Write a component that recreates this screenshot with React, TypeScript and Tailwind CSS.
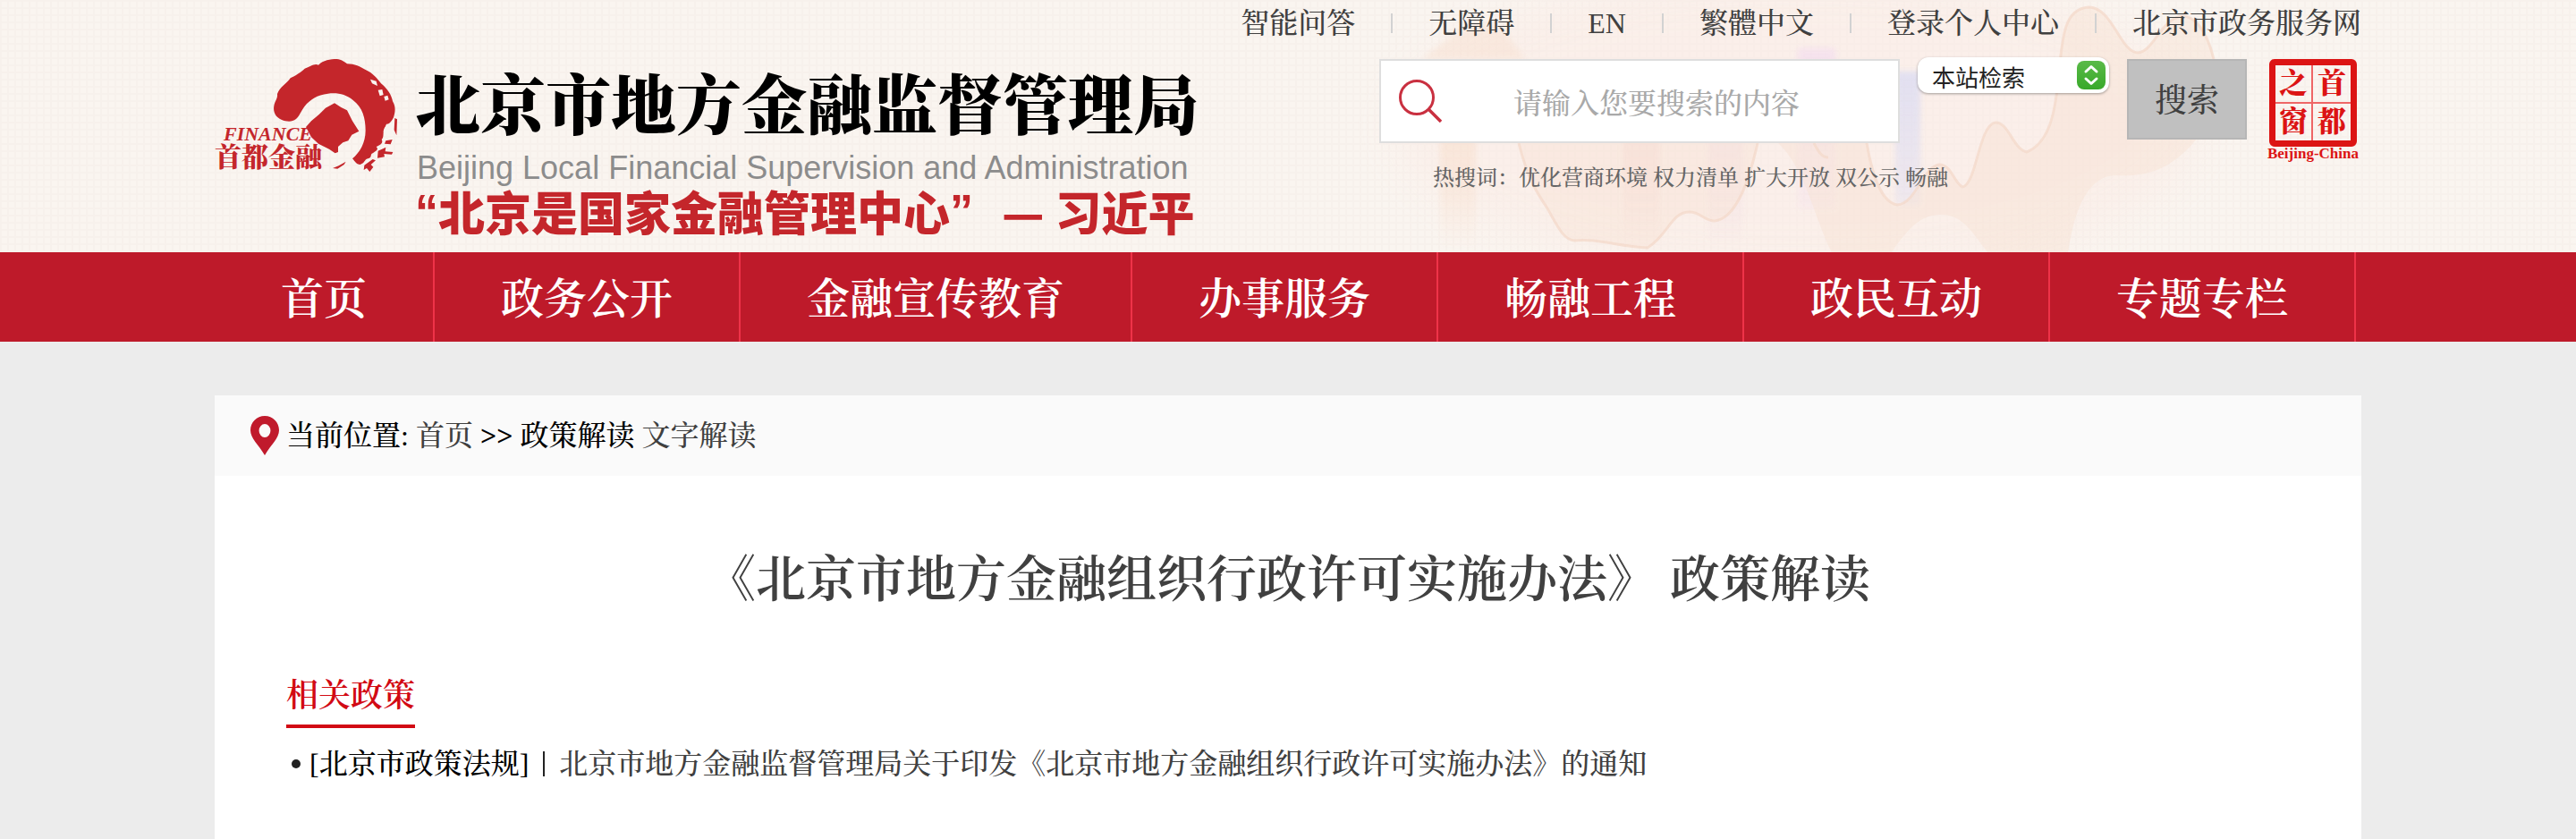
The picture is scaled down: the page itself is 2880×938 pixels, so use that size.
import type { ReactNode } from 'react';

const topLinks = ['智能问答', '无障碍', 'EN', '繁體中文', '登录个人中心', '北京市政务服务网'];
const hotWords = ['优化营商环境', '权力清单', '扩大开放', '双公示', '畅融'];
const navItems = ['首页', '政务公开', '金融宣传教育', '办事服务', '畅融工程', '政民互动', '专题专栏'];

function Container({ className = '', children }: { className?: string; children: ReactNode }) {
  return <div className={`mx-auto w-full max-w-[2400px] ${className}`}>{children}</div>;
}

function HeaderArt() {
  return (
    <svg
      className="pointer-events-none absolute left-1/2 top-0 -ml-10 opacity-80"
      width="1200"
      height="282"
      viewBox="0 0 1200 282"
      fill="none"
      aria-hidden="true"
    >
      <defs>
        <filter id="soft" x="-20%" y="-20%" width="140%" height="140%">
          <feGaussianBlur stdDeviation="24" />
        </filter>
        <filter id="edge" x="-20%" y="-20%" width="140%" height="140%">
          <feGaussianBlur stdDeviation="3" />
        </filter>
        <linearGradient id="fade" x1="0" y1="0" x2="0" y2="1">
          <stop offset="0" stopColor="#fff" stopOpacity="1" />
          <stop offset="0.75" stopColor="#fff" stopOpacity="0.4" />
          <stop offset="1" stopColor="#fff" stopOpacity="0" />
        </linearGradient>
        <mask id="fadeMask">
          <rect width="1200" height="282" fill="url(#fade)" />
        </mask>
      </defs>
      <ellipse cx="610" cy="140" rx="450" ry="170" fill="#fbe8e2" opacity="0.55" filter="url(#soft)" />
      <path d="M190 66C210 50 240 24 262 26C285 30 292 52 306 66Z" fill="#f8dfcf" opacity="0.6" filter="url(#edge)" />
      <g mask="url(#fadeMask)" filter="url(#edge)">
        <rect x="210" y="120" width="40" height="162" fill="#f8d9c4" />
        <rect x="414" y="120" width="42" height="150" fill="#f4cfcb" />
        <rect x="509" y="120" width="40" height="150" fill="#f0d8e2" />
        <rect x="610" y="54" width="42" height="180" fill="#f4dcee" />
        <rect x="719" y="80" width="28" height="150" fill="#d3d5f4" />
      </g>
      <path
        d="M298 160C308 200 318 215 330 233C342 254 348 268 360 269C385 266 410 276 442 277C466 262 468 237 489 237C501 237 506 247 517 247C542 244 556 200 565 160Z"
        fill="#f8e0d0"
        opacity="0.45"
      />
      <path
        d="M588 160C620 190 630 250 648 282H715C740 244 755 240 772 240C796 241 806 262 822 282H912C920 230 936 196 966 196C1000 198 1030 190 1060 150L1075 66C1066 30 1052 18 1040 18C1016 20 1008 58 990 59C970 58 962 8 935 8C908 10 906 40 902 80C898 130 890 160 866 170C850 166 846 137 831 137C812 140 810 206 794 209C784 204 782 184 768 184C750 186 742 228 721 229C704 226 694 200 687 160Z"
        fill="#f8e0d0"
        opacity="0.5"
      />
      <g stroke="#f3d3c2" strokeWidth="3" opacity="0.75">
        <path d="M298 160C308 200 318 215 330 233C342 254 348 268 360 269C385 266 410 276 442 277C466 262 468 237 489 237C501 237 506 247 517 247C542 244 556 200 565 160" />
        <path d="M628 160C634 172 638 176 644 176" />
        <path d="M687 160C694 200 704 226 721 229C742 228 750 186 768 184C782 184 784 204 794 209C810 206 812 140 831 137C846 137 850 166 866 170C890 160 898 130 902 80C906 40 908 10 935 8C962 8 970 58 990 59C1008 58 1016 20 1040 18C1052 18 1066 30 1075 66" />
      </g>
    </svg>
  );
}

function Emblem() {
  return (
    <a href="#" aria-label="首都金融" className="relative block h-[150px] w-[204px] shrink-0 text-[#c4262b]">
      <svg
        className="absolute bottom-0 right-0"
        width="150"
        height="150"
        viewBox="222 36 450 450"
        fill="none"
        aria-hidden="true"
      >
        <path
          d="M332 250C320 260 300 258 285 252C265 244 255 226 259 205C262 188 272 180 270 165C278 142 302 130 314 112C330 104 350 92 362 80C380 74 394 62 408 68C424 52 448 48 470 48C486 50 494 56 504 64C530 64 548 74 566 84C590 94 606 114 618 130C640 148 654 170 657 190C668 208 666 226 660 244C652 262 640 266 630 278C622 292 630 308 620 318C626 328 618 336 602 342C612 352 600 356 590 364C580 366 590 380 574 382C560 386 566 396 548 402C534 402 530 390 522 382C546 362 566 330 566 288C566 246 556 210 524 186C500 166 472 160 440 164C404 168 380 184 362 206C350 222 344 240 332 250Z"
          fill="#c4262b"
        />
        <path d="M664 246L672 250L670 304L662 286ZM634 322L656 318L650 334L630 332ZM608 356L634 344L632 358L658 360L654 368L628 366L630 376L606 380ZM562 404L590 384L600 388L584 402L592 410L580 426L570 414L560 420ZM456 414L476 406L500 392L494 402L472 416Z" fill="#c4262b" />
        <path d="M582 116L602 122L606 138L588 130ZM608 152L622 150L626 168L614 172ZM628 174L640 170L644 184L632 188ZM636 266L658 264L660 300L640 306L626 290Z" fill="#f9f4f0" />
        <path
          d="M462 196L484 210L504 220L522 256L544 290L520 302L508 322L490 328L474 342L474 360L464 364L444 350L408 332L384 310L366 276L384 256L410 234L432 212Z"
          fill="#c4262b"
        />
      </svg>
      <span className="absolute bottom-[50px] left-2.5 text-[22px] font-bold italic leading-6">FINANCE</span>
      <span className="absolute bottom-[18px] left-0 text-[30px] font-black leading-9">首都金融</span>
    </a>
  );
}

function Brand() {
  return (
    <div className="flex shrink-0 items-start gap-5 pt-[62px]">
      <Emblem />
      <div className="flex flex-col pt-2">
        <h1 className="text-[73px] font-black leading-[100px] text-black">北京市地方金融监督管理局</h1>
        <p className="pl-0.5 font-['Liberation_Sans',sans-serif] text-4xl leading-9 text-[#8c8c8c]">
          Beijing Local Financial Supervision and Administration
        </p>
        <p className="flex font-['Liberation_Sans','Noto_Sans_CJK_SC',sans-serif] text-[52px] font-black leading-[60px] text-[#c4262b]">
          <span>“</span>
          <span className="font-['Noto_Sans_CJK_SC',sans-serif]">北京是国家金融管理中心</span>
          <span>”</span>
          <span className="ml-8 font-['Noto_Sans_CJK_SC',sans-serif]">—</span>
          <span className="ml-3 font-['Noto_Sans_CJK_SC',sans-serif]">习近平</span>
        </p>
      </div>
    </div>
  );
}

function Seal() {
  return (
    <a href="#" aria-label="首都之窗 Beijing-China" className="flex w-[108px] flex-col items-center text-[#dc1414]">
      <span className="grid size-[98px] grid-cols-2 rounded-md border-[7px] border-[#dc1414] text-center text-[32px] font-black leading-10">
        <span className="border-b-2 border-r-2 border-[#e66]">之</span>
        <span className="border-b-2 border-[#e66]">首</span>
        <span className="border-r-2 border-[#e66]">窗</span>
        <span>都</span>
      </span>
      <span className="text-[17px] font-bold leading-4">Beijing-China</span>
    </a>
  );
}

function SearchForm() {
  return (
    <form className="flex items-start gap-5" onSubmit={(e) => e.preventDefault()}>
      <label className="flex h-[94px] w-[582px] items-center border-2 border-[#dedede] bg-white pl-5">
        <svg width="48" height="48" viewBox="0 0 48 48" fill="none" stroke="#c93040" strokeWidth="3" aria-hidden="true">
          <circle cx="20" cy="20" r="18.5" />
          <path d="M33 33L47 47" strokeWidth="3.5" />
        </svg>
        <input
          type="text"
          aria-label="搜索内容"
          placeholder="请输入您要搜索的内容"
          className="ml-20 h-full min-w-0 flex-1 bg-transparent pt-1.5 text-[32px] font-medium text-[#404040] outline-none placeholder:text-[#a9a9a9]"
        />
      </label>
      <div className="relative -mt-0.5">
        <select
          aria-label="检索范围"
          className="h-10 w-[214px] appearance-none rounded-xl bg-white pl-4 pt-0.5 font-['Noto_Sans_CJK_SC',sans-serif] text-[26px] leading-10 text-[#222] shadow-[0_1px_3px_rgba(0,0,0,0.35)]"
        >
          <option>本站检索</option>
        </select>
        <svg className="pointer-events-none absolute right-1 top-1" width="32" height="32" viewBox="0 0 32 32" fill="none" aria-hidden="true">
          <defs>
            <linearGradient id="stepper" x1="0" y1="0" x2="0" y2="1">
              <stop offset="0" stopColor="#5aba48" />
              <stop offset="1" stopColor="#38a92a" />
            </linearGradient>
          </defs>
          <rect width="32" height="32" rx="8" fill="url(#stepper)" />
          <path d="M10 12L16 6.5L22 12M10 20L16 25.500L22 20" stroke="#fff" strokeWidth="3" strokeLinecap="round" strokeLinejoin="round" />
        </svg>
      </div>
      <button type="submit" className="h-[90px] w-[134px] border-2 border-[#b6b6b6] bg-[#c0c0c0] pt-1 text-4xl font-medium text-[#404040]">
        搜索
      </button>
      <Seal />
    </form>
  );
}

function Header() {
  return (
    <header className="relative overflow-hidden bg-[#faf5f0] bg-[linear-gradient(#f7f1ec_2px,transparent_2px),linear-gradient(90deg,#f7f1ec_2px,transparent_2px)] bg-[length:8px_8px]">
      <HeaderArt />
      <Container className="relative flex h-[282px] justify-between">
        <Brand />
        <div className="flex shrink-0 flex-col items-end">
          <ul className="flex h-[52px] items-center text-[32px] font-medium leading-[52px] text-[#404040]">
            {topLinks.map((label, i) => (
              <li key={label} className="flex items-center">
                {i > 0 && <span className="mx-10 h-[22px] w-0.5 bg-[#d2d2d2]" />}
                <a href="#">{label}</a>
              </li>
            ))}
          </ul>
          <div className="flex flex-col pt-3.5">
            <SearchForm />
            <p className="flex pl-[60px] text-2xl font-medium leading-[38px] text-[#666]">
              <span>热搜词：</span>
              <span className="flex gap-1.5">
                {hotWords.map((word) => (
                  <a key={word} href="#">
                    {word}
                  </a>
                ))}
              </span>
            </p>
          </div>
        </div>
      </Container>
    </header>
  );
}

export default function App() {
  return (
    <div className="flex min-h-screen flex-col bg-[#ececec] font-['Liberation_Serif','Noto_Serif_CJK_SC','Noto_Sans_CJK_SC',serif] text-black">
      <Header />
      <nav className="bg-[#be1a2a]">
        <Container className="flex">
          {navItems.map((label) => (
            <a
              key={label}
              href="#"
              className="border-r-2 border-[#ee3348] px-[74px] pt-1.5 text-5xl font-semibold leading-[94px] text-white"
            >
              {label}
            </a>
          ))}
        </Container>
      </nav>
      <Container className="flex flex-1 flex-col pt-[60px]">
        <main className="flex-1 bg-white">
          <div className="flex h-[90px] items-center bg-[#fafafa] pl-10 text-[32px]">
            <svg width="32" height="44" viewBox="0 0 32 44" aria-hidden="true">
              <path
                fillRule="evenodd"
                d="M16 0C7 0 0 7 0 16C0 25 9 32 16 44C23 32 32 25 32 16C32 7 25 0 16 0ZM16 9A6 7 0 1 1 16 24A6 7 0 1 1 16 9Z"
                fill="#c01a2c"
              />
            </svg>
            <p className="flex gap-2 pl-2 font-medium">
              <span>当前位置:</span>
              <a href="#" className="text-[#404040]">首页</a>
              <span className="font-bold">&gt;&gt;</span>
              <span>政策解读</span>
              <a href="#" className="text-[#404040]">文字解读</a>
            </p>
          </div>
          <h2 className="pt-[76px] text-center text-[56px] font-semibold leading-[80px] text-[#404040]">
            《北京市地方金融组织行政许可实施办法》 政策解读
          </h2>
          <section className="px-20 pt-[58px]">
            <h3 className="inline-block border-b-4 border-[#d20a14] text-4xl font-semibold leading-[64px] text-[#d20a14]">
              相关政策
            </h3>
            <ul className="pt-4">
              <li className="flex items-center pl-1.5 text-[32px] leading-[48px]">
                <span className="size-2.5 rounded-full bg-[#222]" />
                <span className="pl-2.5 font-medium">[北京市政策法规]</span>
                <span className="mx-4 h-7 w-0.5 bg-[#222]" />
                <a href="#" className="font-medium text-[#404040]">
                  北京市地方金融监督管理局关于印发《北京市地方金融组织行政许可实施办法》的通知
                </a>
              </li>
            </ul>
          </section>
        </main>
      </Container>
    </div>
  );
}
